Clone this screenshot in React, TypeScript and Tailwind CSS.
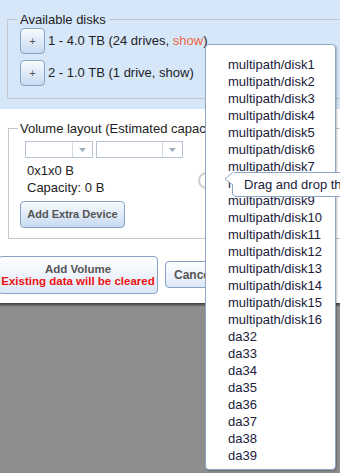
import React from 'react';

const DISKS = [
  ...Array.from({ length: 16 }, (_, i) => `multipath/disk${i + 1}`),
  ...Array.from({ length: 8 }, (_, i) => `da${32 + i}`),
];

const btn =
  'border border-[#86a2c4] rounded-[4px] bg-gradient-to-b from-[#f7fafd] to-[#c8dbf1] shadow-[inset_0_1px_0_#ffffff]';

function Select({ width }: { width: string }) {
  return (
    <div className={`${width} h-[17px] flex border border-[#b8c3d1] bg-white`}>
      <div className="flex-1" />
      <div className="w-[20px] border-l border-[#d3d9e1] flex items-center justify-center">
        <svg width="7" height="4" viewBox="0 0 7 4">
          <path d="M0 0 L7 0 L3.5 4 Z" fill="#9eadc0" />
        </svg>
      </div>
    </div>
  );
}

export default function App() {
  return (
    <div className="relative w-[340px] h-[473px] overflow-hidden bg-[#8e8e8e] text-[13px] text-[#222] font-['Liberation_Sans',Arial,sans-serif]">
      {/* Dialog */}
      <div className="w-[420px] h-[303px] bg-white">
        {/* Available disks */}
        <div className="bg-[#d6e7fa] pt-[12px] pb-[10px]">
          <fieldset className="ml-[7px] w-[420px] border border-[#c4c8cc] pl-[12px] pt-[1px] pb-[12px]">
            <legend className="-ml-[3px] px-[3px] leading-[15px]">Available disks</legend>
            <div className="flex items-center gap-[3px] h-[26px]">
              <button className={`${btn} w-[25px] h-[26px] text-[11px] text-[#555]`}>+</button>
              <span>
                1 - 4.0 TB (24 drives, <span className="text-[#f0643c]">show</span>)
              </span>
            </div>
            <div className="flex items-center gap-[3px] h-[26px] mt-[6px]">
              <button className={`${btn} w-[25px] h-[26px] text-[11px] text-[#555]`}>+</button>
              <span>2 - 1.0 TB (1 drive, show)</span>
            </div>
          </fieldset>
        </div>

        {/* Volume layout */}
        <div className="pt-[12px]">
          <fieldset className="ml-[8px] w-[420px] border border-[#c4c8cc] pl-[11px] pb-[10px]">
            <legend className="-ml-[2px] px-[2px] leading-[15px] whitespace-nowrap">
              Volume layout (Estimated capacity: 0 B)
            </legend>
            <div className="flex gap-[3px] mt-[5px] pl-[5px]">
              <Select width="w-[68px]" />
              <Select width="w-[87px]" />
            </div>
            <div className="mt-[4px] pl-[7px] leading-[17px]">
              <div>0x1x0 B</div>
              <div>Capacity: 0 B</div>
            </div>
            <button
              className={`${btn} mt-[5px] w-[105px] h-[27px] text-[11px] font-bold text-[#555]`}
            >
              Add Extra Device
            </button>
          </fieldset>

          <div className="flex items-start mt-[17px]">
            <button
              className={`${btn} -ml-[2px] w-[160px] h-[38px] from-[#ffffff] to-[#dce8f6] flex flex-col items-center justify-center leading-[12px] text-[11.5px] font-bold whitespace-nowrap`}
            >
              <span className="text-[#555]">Add Volume</span>
              <span className="text-[#ee1111]">Existing data will be cleared</span>
            </button>
            <button
              className={`${btn} ml-[7px] mt-[5px] w-[80px] h-[27px] from-[#ffffff] to-[#dce8f6] text-[12px] font-bold text-[#555] text-left pl-[8px]`}
            >
              Cancel
            </button>
          </div>
        </div>
      </div>
      <div className="h-[4px] bg-gradient-to-b from-[#3c3c3c] to-[#8e8e8e]" />

      {/* help icon behind the popup */}
      <div className="absolute left-[198px] top-[172px] w-[17px] h-[17px] rounded-full border-2 border-[#cfcfcf] bg-white" />

      {/* Disk list popup */}
      <div className="absolute left-[205px] top-[44px] w-[131px] h-[426px] bg-white border border-[#8ea6c4] rounded-[4px] shadow-[1px_1px_2px_rgba(0,0,0,0.25)] pt-[11px] pl-[22px] leading-[17px] text-[#20203a]">
        {DISKS.map((d) => (
          <div key={d}>{d}</div>
        ))}
      </div>

      {/* Tooltip */}
      <div className="absolute left-[232px] top-[172px] w-[170px] h-[25px] bg-white border border-[#8ea6c4] rounded-[4px] pl-[11px] leading-[23px] whitespace-nowrap text-[#20203a]">
        Drag and drop the disks here
      </div>
      <svg className="absolute left-[224px] top-[171px]" width="10" height="16" viewBox="0 0 10 16">
        <path d="M9 1 L1 8 L9 14" fill="#ffffff" stroke="#8ea6c4" strokeWidth="1" />
        <rect x="9" y="1.5" width="1.5" height="12.5" fill="#ffffff" />
      </svg>
    </div>
  );
}
